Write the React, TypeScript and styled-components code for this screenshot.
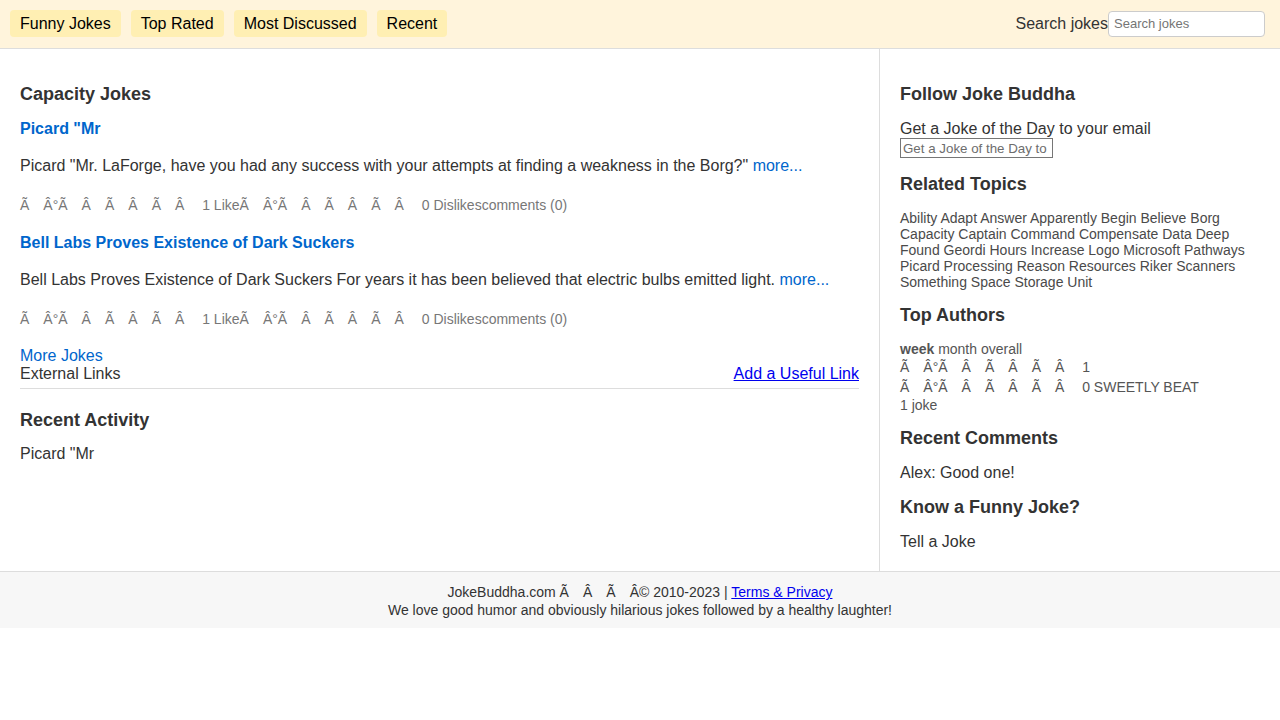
import React from "react";
import styled, { createGlobalStyle } from "styled-components";

const Global = createGlobalStyle`
  html, body { margin: 0; padding: 0; background: #fff; }
  body {
    font-family: "Liberation Sans", Arial, Helvetica, sans-serif;
    color: #333;
    font-size: 16px;
  }
  * { box-sizing: border-box; }
`;

const Header = styled.header`
  height: 49px;
  background: #fff4dc;
  border-bottom: 1px solid #ddd;
  display: flex;
  align-items: center;
  justify-content: space-between;
  padding: 0 15px 1px 10px;
`;

const Nav = styled.nav`
  display: flex;
  gap: 10px;
`;

const NavButton = styled.a`
  display: block;
  background: #ffefb3;
  color: #000;
  text-decoration: none;
  font-size: 16px;
  line-height: 19px;
  padding: 4px 10px;
  border-radius: 4px;
`;

const SearchForm = styled.form`
  display: flex;
  align-items: center;
  margin: 0;
`;

const SearchLabel = styled.label`
  font-size: 16px;
  color: #333;
`;

const SearchInput = styled.input`
  width: 157px;
  height: 26px;
  border: 1px solid #ccc;
  border-radius: 4px;
  padding: 0 5px;
  font-family: "Liberation Sans", Arial, sans-serif;
  font-size: 13px;
  background: #fff;
  &::placeholder { color: #757575; }
`;

const Body = styled.div`
  display: flex;
  align-items: stretch;
`;

const Main = styled.main`
  flex: 1;
  padding: 0 20px 20px 20px;
  min-width: 0;
`;

const Aside = styled.aside`
  width: 401px;
  flex-shrink: 0;
  border-left: 1px solid #ddd;
  padding: 0 20px 19px 20px;
`;

const SectionTitle = styled.h2<{ $top: number }>`
  font-size: 18px;
  line-height: 22px;
  font-weight: bold;
  color: #333;
  margin: ${(p) => p.$top}px 0 0 0;
`;

const JokeTitle = styled.a`
  display: block;
  font-size: 16px;
  line-height: 20px;
  font-weight: bold;
  color: #0066cc;
  text-decoration: none;
  margin-top: 14px;
`;

const JokeText = styled.p`
  margin: 17px 0 0 0;
  font-size: 16px;
  line-height: 20px;
  color: #333;
`;

const MoreLink = styled.a`
  color: #0066cc;
  text-decoration: none;
`;

const Meta = styled.div`
  margin: 19px 0 18px 0;
  font-size: 14px;
  line-height: 20px;
  color: #777;
  white-space: pre;
`;

const MoreJokes = styled.a`
  display: block;
  font-size: 16px;
  line-height: 18px;
  color: #0066cc;
  text-decoration: none;
  margin-top: 5px;
`;

const ExternalRow = styled.div`
  display: flex;
  justify-content: space-between;
  font-size: 16px;
  line-height: 18px;
  padding-bottom: 5px;
  border-bottom: 1px solid #ddd;
`;

const PlainLink = styled.a`
  color: #0000ee;
  text-decoration: underline;
`;

const Line = styled.div<{ $top: number; $lh?: number; $size?: number; $color?: string }>`
  margin-top: ${(p) => p.$top}px;
  font-size: ${(p) => p.$size ?? 16}px;
  line-height: ${(p) => p.$lh ?? 20}px;
  color: ${(p) => p.$color ?? "#333"};
`;

const EmailInput = styled.input`
  display: block;
  width: 153px;
  height: 20px;
  margin-top: 0;
  border: 1px solid #767676;
  padding: 1px 2px;
  font-family: "Liberation Sans", Arial, sans-serif;
  font-size: 13.33px;
  background: #fff;
  &::placeholder { color: #6d6d6d; }
`;

const Topics = styled.div`
  margin-top: 15px;
  font-size: 14px;
  line-height: 16px;
  color: #4a4a4a;
`;

const Authors = styled.div`
  margin-top: 15px;
  font-size: 14px;
  color: #555;
`;

const AuthorLine = styled.div<{ $lh: number }>`
  line-height: ${(p) => p.$lh}px;
  white-space: pre;
`;

const Footer = styled.footer`
  border-top: 1px solid #ddd;
  background: #f7f7f7;
  text-align: center;
  font-size: 14px;
  line-height: 18px;
  color: #333;
  padding: 11px 0 9px;
`;

const G = "Ã\u2003Â°Ã\u2003Â\u2003Ã\u2003Â\u2003Ã\u2003Â\u2003 ";

const jokes = [
  {
    title: 'Picard "Mr',
    text: 'Picard "Mr. LaForge, have you had any success with your attempts at finding a weakness in the Borg?"',
  },
  {
    title: "Bell Labs Proves Existence of Dark Suckers",
    text: "Bell Labs Proves Existence of Dark Suckers For years it has been believed that electric bulbs emitted light.",
  },
];

const topics = [
  "Ability", "Adapt", "Answer", "Apparently", "Begin", "Believe", "Borg", "Capacity", "Captain",
  "Command", "Compensate", "Data", "Deep", "Found", "Geordi", "Hours", "Increase", "Logo",
  "Microsoft", "Pathways", "Picard", "Processing", "Reason", "Resources", "Riker", "Scanners",
  "Something", "Space", "Storage", "Unit",
];

export default function App() {
  return (
    <>
      <Global />
      <Header>
        <Nav>
          <NavButton href="#">Funny Jokes</NavButton>
          <NavButton href="#">Top Rated</NavButton>
          <NavButton href="#">Most Discussed</NavButton>
          <NavButton href="#">Recent</NavButton>
        </Nav>
        <SearchForm onSubmit={(e) => e.preventDefault()}>
          <SearchLabel htmlFor="q">Search jokes</SearchLabel>
          <SearchInput id="q" placeholder="Search jokes" />
        </SearchForm>
      </Header>
      <Body>
        <Main>
          <SectionTitle $top={34}>Capacity Jokes</SectionTitle>
          {jokes.map((j) => (
            <React.Fragment key={j.title}>
              <JokeTitle href="#">{j.title}</JokeTitle>
              <JokeText>
                {j.text} <MoreLink href="#">more...</MoreLink>
              </JokeText>
              <Meta>{`${G}1 Like${G}0 Dislikes`}comments (0)</Meta>
            </React.Fragment>
          ))}
          <MoreJokes href="#">More Jokes</MoreJokes>
          <ExternalRow>
            <span>External Links</span>
            <PlainLink href="#">Add a Useful Link</PlainLink>
          </ExternalRow>
          <SectionTitle $top={20}>Recent Activity</SectionTitle>
          <Line $top={13}>Picard "Mr</Line>
        </Main>
        <Aside>
          <SectionTitle $top={34}>Follow Joke Buddha</SectionTitle>
          <Line $top={15} $lh={18}>Get a Joke of the Day to your email</Line>
          <EmailInput placeholder="Get a Joke of the Day to your email" />
          <SectionTitle $top={15}>Related Topics</SectionTitle>
          <Topics>{topics.join(" ")}</Topics>
          <SectionTitle $top={14}>Top Authors</SectionTitle>
          <Authors>
            <AuthorLine $lh={16}>
              <b>week</b> month overall
            </AuthorLine>
            <AuthorLine $lh={20}>{`${G}1`}</AuthorLine>
            <AuthorLine $lh={20}>{`${G}0 SWEETLY BEAT`}</AuthorLine>
            <AuthorLine $lh={17}>1 joke</AuthorLine>
          </Authors>
          <SectionTitle $top={13}>Recent Comments</SectionTitle>
          <Line $top={14}>Alex: Good one!</Line>
          <SectionTitle $top={13}>Know a Funny Joke?</SectionTitle>
          <Line $top={14}>Tell a Joke</Line>
        </Aside>
      </Body>
      <Footer>
        <div>
          JokeBuddha.com Ã{"\u2003"}Â{"\u2003"}Ã{"\u2003"}Â© 2010-2023 | <PlainLink href="#">Terms &amp; Privacy</PlainLink>
        </div>
        <div>We love good humor and obviously hilarious jokes followed by a healthy laughter!</div>
      </Footer>
    </>
  );
}
